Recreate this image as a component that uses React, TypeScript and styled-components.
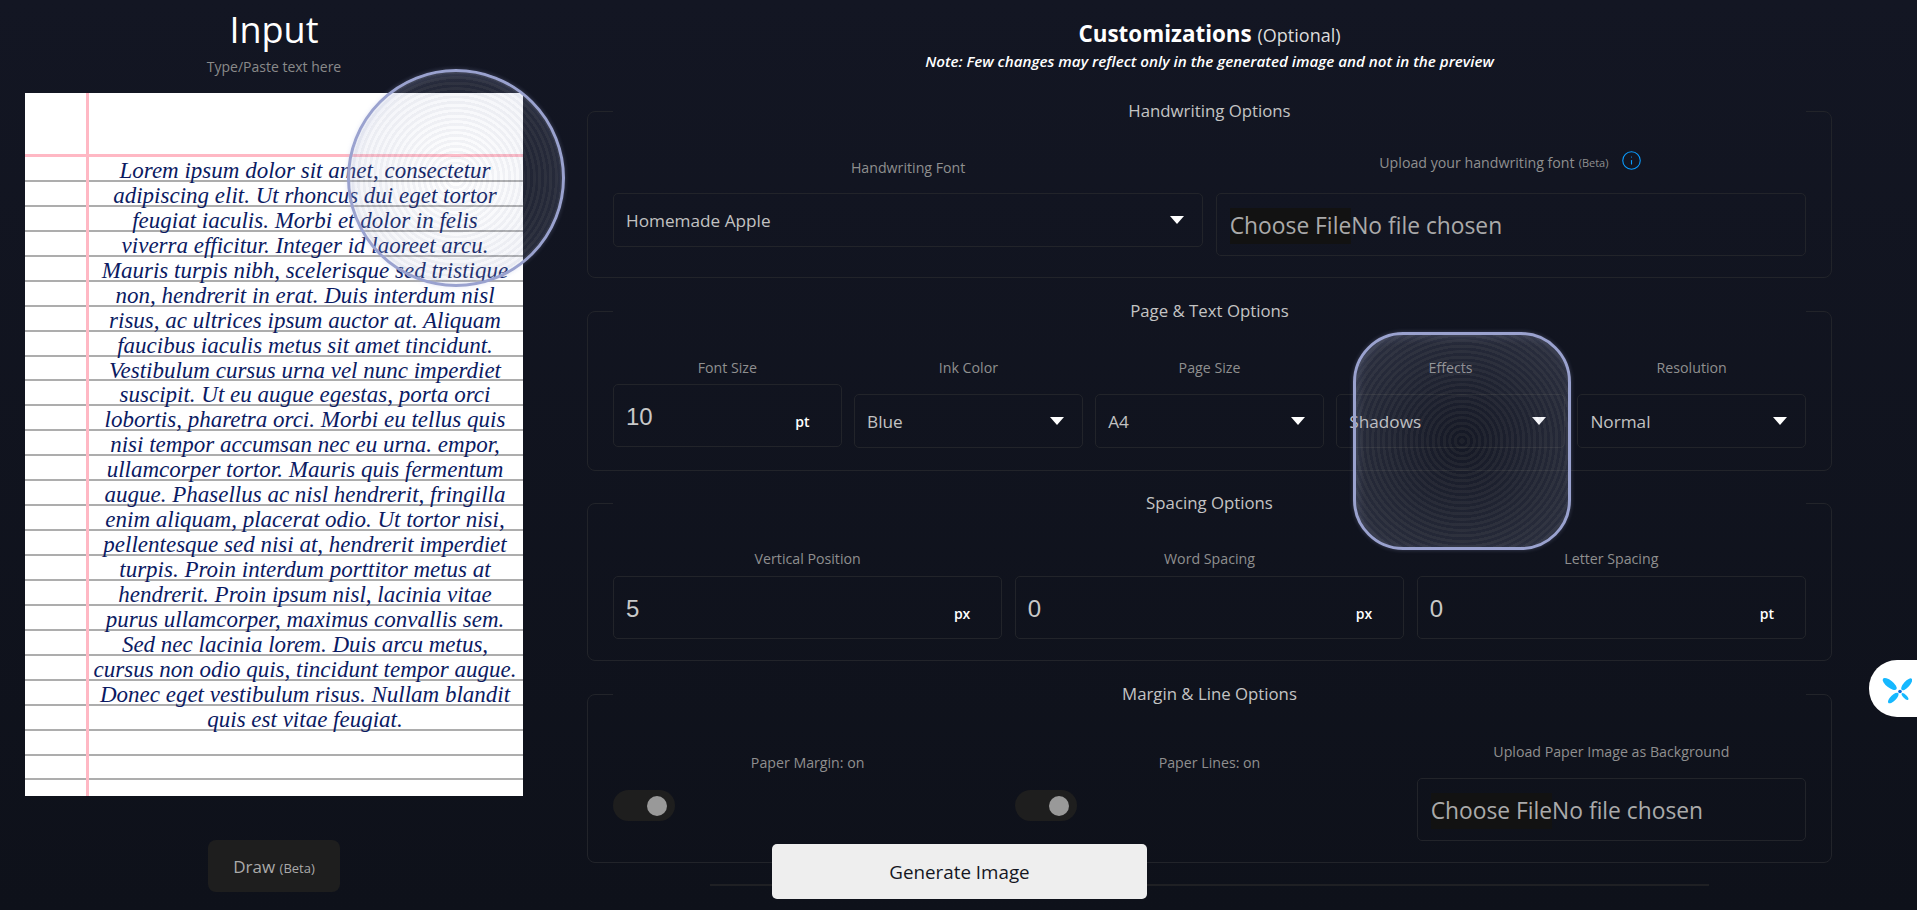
import React from 'react';
import styled, { createGlobalStyle } from 'styled-components';
import { Info } from 'lucide-react';

const UI_FONT = '"Open Sans", "Noto Sans", sans-serif';

const PAGE_LINES = [
  'Lorem ipsum dolor sit amet, consectetur',
  'adipiscing elit. Ut rhoncus dui eget tortor',
  'feugiat iaculis. Morbi et dolor in felis',
  'viverra efficitur. Integer id laoreet arcu.',
  'Mauris turpis nibh, scelerisque sed tristique',
  'non, hendrerit in erat. Duis interdum nisl',
  'risus, ac ultrices ipsum auctor at. Aliquam',
  'faucibus iaculis metus sit amet tincidunt.',
  'Vestibulum cursus urna vel nunc imperdiet',
  'suscipit. Ut eu augue egestas, porta orci',
  'lobortis, pharetra orci. Morbi eu tellus quis',
  'nisi tempor accumsan nec eu urna. empor,',
  'ullamcorper tortor. Mauris quis fermentum',
  'augue. Phasellus ac nisl hendrerit, fringilla',
  'enim aliquam, placerat odio. Ut tortor nisi,',
  'pellentesque sed nisi at, hendrerit imperdiet',
  'turpis. Proin interdum porttitor metus at',
  'hendrerit. Proin ipsum nisl, lacinia vitae',
  'purus ullamcorper, maximus convallis sem.',
  'Sed nec lacinia lorem. Duis arcu metus,',
  'cursus non odio quis, tincidunt tempor augue.',
  'Donec eget vestibulum risus. Nullam blandit',
  'quis est vitae feugiat.',
  '',
  '',
];

const GlobalStyle = createGlobalStyle`
  html, body {
    margin: 0;
    padding: 0;
    background: #10131d;
  }
  * {
    box-sizing: border-box;
  }
`;

const Page = styled.div`
  position: relative;
  display: flex;
  height: 910px;
  overflow: hidden;
  font-family: ${UI_FONT};
  background: linear-gradient(180deg, #131623 0%, #0e111a 100%);
`;

const LeftColumn = styled.section`
  width: 548px;
  flex: none;
  display: flex;
  flex-direction: column;
  align-items: center;
`;

const InputTitle = styled.h1`
  margin: 6px 0 0;
  height: 48px;
  font-size: 36px;
  line-height: 48px;
  font-weight: 400;
  color: #fff;
`;

const InputHint = styled.p`
  margin: 3px 0 17px;
  height: 19px;
  font-size: 14px;
  line-height: 19px;
  color: #8a8a8a;
`;

const Paper = styled.div`
  position: relative;
  width: 498px;
  height: 703px;
  background: #fff;
  flex: none;

  &::before {
    content: '';
    position: absolute;
    top: 0;
    bottom: 0;
    left: 61px;
    width: 3px;
    background: #ffb8c4;
  }
`;

const PaperHead = styled.div`
  height: 64px;
  border-bottom: 3px solid #ffb8c4;
`;

const WriteLine = styled.div`
  height: 24.95px;
  border-bottom: 2px solid #adadad;
  padding: 0 3px 0 65px;
  text-align: center;
  white-space: nowrap;
  font-family: 'Liberation Serif', serif;
  font-style: italic;
  font-size: 23px;
  line-height: 27px;
  color: #0b1a62;
`;

const DrawButton = styled.button`
  margin-top: 44px;
  width: 132px;
  height: 52px;
  border: none;
  border-radius: 8px;
  background: #1e1e1e;
  color: #aaa;
  font-family: ${UI_FONT};
  font-size: 17px;

  small {
    font-size: 13px;
  }
`;

const RightColumn = styled.main`
  flex: 1;
  padding: 0 85px 0 39px;
`;

const Header = styled.header`
  text-align: center;
  margin-bottom: 28px;
`;

const Heading = styled.h2`
  margin: 19px 0 0;
  height: 29px;
  font-size: 22.4px;
  line-height: 29px;
  font-weight: 700;
  color: #fff;

  small {
    font-size: 18px;
    font-weight: 400;
    color: #ddd;
  }
`;

const Note = styled.p`
  margin: 3px 0 0;
  height: 20px;
  font-size: 15.2px;
  line-height: 20px;
  font-style: italic;
  font-weight: 600;
  color: #fff;
`;

const Panel = styled.fieldset<{ $gap?: number }>`
  margin: ${(p) => p.$gap ?? 0}px 0 0;
  padding: 0 25px;
  border: 1px solid #22242a;
  border-radius: 8px;
  min-inline-size: 0;
`;

const Legend = styled.legend`
  width: 100%;
  padding: 0;
  height: 24px;
  text-align: center;
  font-size: 16.8px;
  line-height: 24px;
  color: #c4c4c4;
`;

const Row = styled.div<{ $cols: string; $top: number; $bottom: number }>`
  display: grid;
  grid-template-columns: ${(p) => p.$cols};
  column-gap: 12.5px;
  align-items: start;
  padding: ${(p) => p.$top}px 0 ${(p) => p.$bottom}px;
`;

const Field = styled.div<{ $gap: number; $top?: number }>`
  display: flex;
  flex-direction: column;
  gap: ${(p) => p.$gap}px;
  padding-top: ${(p) => p.$top ?? 0}px;
`;

const Label = styled.label`
  display: flex;
  align-items: center;
  justify-content: center;
  height: 20px;
  font-size: 14.2px;
  color: #8f8f8f;

  small {
    margin-left: 4px;
    font-size: 11px;
  }
`;

const InfoMark = styled(Info)`
  margin: -3px 0 0 13px;
  color: #0a9cff;
`;

const SelectBox = styled.div`
  height: 54px;
  display: flex;
  align-items: center;
  justify-content: space-between;
  padding: 0 18px 0 12px;
  border: 1px solid #22242a;
  border-radius: 5px;
  font-size: 17.2px;
  color: #c2c2c2;

  &::after {
    content: '';
    width: 0;
    height: 0;
    border-left: 7px solid transparent;
    border-right: 7px solid transparent;
    border-top: 8px solid #fff;
  }
`;

const NumberBox = styled.div`
  height: 63px;
  display: flex;
  align-items: center;
  justify-content: space-between;
  padding: 3px 31px 0 12px;
  border: 1px solid #22242a;
  border-radius: 5px;
`;

const NumberValue = styled.span`
  font-family: 'Liberation Sans', sans-serif;
  font-size: 24px;
  color: #c8c8c8;
`;

const Unit = styled.span`
  margin-top: 9px;
  font-size: 14px;
  font-weight: 600;
  color: #fff;
`;

const FileBox = styled.div`
  height: 63px;
  display: flex;
  align-items: center;
  padding: 0 13px;
  border: 1px solid #22242a;
  border-radius: 5px;
  font-size: 22.8px;
  color: #aaa;
`;

const FileButton = styled.span`
  height: 36px;
  margin-top: 2px;
  line-height: 36px;
  background: #121212;
`;

const FileStatus = styled.span`
  margin-top: 2px;
`;

const Toggle = styled.div`
  width: 62px;
  height: 31px;
  display: flex;
  align-items: center;
  justify-content: flex-end;
  padding-right: 8px;
  border-radius: 16px;
  background: #1e1e1e;

  &::after {
    content: '';
    width: 20px;
    height: 20px;
    border-radius: 50%;
    background: #999;
  }
`;

const Divider = styled.hr`
  margin: 21px 123px 0;
  border: none;
  height: 2px;
  background: #1f2024;
`;

const GenerateButton = styled.button`
  position: absolute;
  left: 772px;
  top: 844px;
  width: 375px;
  height: 55px;
  border: none;
  border-radius: 5px;
  background: #eee;
  color: #14161f;
  font-family: ${UI_FONT};
  font-size: 18.8px;
`;

const Glass = styled.div<{ $left: number; $top: number; $radius: string }>`
  position: absolute;
  left: ${(p) => p.$left}px;
  top: ${(p) => p.$top}px;
  width: 218px;
  height: 218px;
  border: 3px solid #9aa2cf;
  border-radius: ${(p) => p.$radius};
  pointer-events: none;
  background:
    repeating-radial-gradient(circle at center, rgba(255, 255, 255, 0.05) 0 2.5px, rgba(60, 70, 110, 0.05) 3px 5.5px),
    radial-gradient(circle at center, rgba(170, 178, 210, 0.01) 0%, rgba(170, 178, 210, 0.18) 100%);
  box-shadow:
    0 0 4px rgba(165, 175, 225, 0.3),
    inset 2px 2px 8px rgba(170, 180, 225, 0.2);
`;

const SideWidget = styled.div`
  position: absolute;
  right: 0;
  top: 660px;
  width: 48px;
  height: 57px;
  display: flex;
  align-items: center;
  padding-left: 11px;
  border-radius: 28px 0 0 28px;
  background: #fff;
`;

function WidgetIcon() {
  return (
    <svg width="32" height="32" viewBox="0 0 32 32">
      <ellipse cx="9.7" cy="11" rx="8.5" ry="3.5" fill="#16b8ff" transform="rotate(38 9.7 11)" />
      <ellipse cx="26.7" cy="11.3" rx="7.5" ry="3" fill="#16b8ff" transform="rotate(-48 26.7 11.3)" />
      <ellipse cx="13.3" cy="25" rx="7" ry="2.8" fill="#16b8ff" transform="rotate(-45 13.3 25)" />
      <ellipse cx="25" cy="23.5" rx="4.5" ry="1.7" fill="#16b8ff" transform="rotate(45 25 23.5)" />
      <circle cx="20" cy="18.5" r="1.8" fill="#0a6ae0" />
    </svg>
  );
}

function FilePicker() {
  return (
    <FileBox>
      <FileButton>Choose File</FileButton>
      <FileStatus>No file chosen</FileStatus>
    </FileBox>
  );
}

function SelectField(props: { label: string; value: string }) {
  return (
    <Field $gap={17}>
      <Label>{props.label}</Label>
      <SelectBox>{props.value}</SelectBox>
    </Field>
  );
}

function NumberField(props: { label: string; value: string; unit: string }) {
  return (
    <Field $gap={8}>
      <Label>{props.label}</Label>
      <NumberBox>
        <NumberValue>{props.value}</NumberValue>
        <Unit>{props.unit}</Unit>
      </NumberBox>
    </Field>
  );
}

export default function App() {
  return (
    <Page>
      <GlobalStyle />
      <LeftColumn>
        <InputTitle>Input</InputTitle>
        <InputHint>Type/Paste text here</InputHint>
        <Paper>
          <PaperHead />
          {PAGE_LINES.map((line, i) => (
            <WriteLine key={i}>{line}</WriteLine>
          ))}
        </Paper>
        <DrawButton>
          Draw <small>(Beta)</small>
        </DrawButton>
      </LeftColumn>

      <RightColumn>
        <Header>
          <Heading>
            Customizations <small>(Optional)</small>
          </Heading>
          <Note>Note: Few changes may reflect only in the generated image and not in the preview</Note>
        </Header>

        <Panel>
          <Legend>Handwriting Options</Legend>
          <Row $cols="1fr 1fr" $top={29} $bottom={21}>
            <Field $gap={16} $top={5}>
              <Label>Handwriting Font</Label>
              <SelectBox>Homemade Apple</SelectBox>
            </Field>
            <Field $gap={21}>
              <Label>
                Upload your handwriting font <small>(Beta)</small>
                <InfoMark size={21} strokeWidth={1.25} />
              </Label>
              <FilePicker />
            </Field>
          </Row>
        </Panel>

        <Panel $gap={21}>
          <Legend>Page &amp; Text Options</Legend>
          <Row $cols="repeat(5, 1fr)" $top={34} $bottom={22}>
            <Field $gap={7}>
              <Label>Font Size</Label>
              <NumberBox>
                <NumberValue>10</NumberValue>
                <Unit>pt</Unit>
              </NumberBox>
            </Field>
            <SelectField label="Ink Color" value="Blue" />
            <SelectField label="Page Size" value="A4" />
            <SelectField label="Effects" value="Shadows" />
            <SelectField label="Resolution" value="Normal" />
          </Row>
        </Panel>

        <Panel $gap={20}>
          <Legend>Spacing Options</Legend>
          <Row $cols="repeat(3, 1fr)" $top={33} $bottom={21}>
            <NumberField label="Vertical Position" value="5" unit="px" />
            <NumberField label="Word Spacing" value="0" unit="px" />
            <NumberField label="Letter Spacing" value="0" unit="pt" />
          </Row>
        </Panel>

        <Panel $gap={21}>
          <Legend>Margin &amp; Line Options</Legend>
          <Row $cols="repeat(3, 1fr)" $top={35} $bottom={21}>
            <Field $gap={18} $top={11}>
              <Label>Paper Margin: on</Label>
              <Toggle />
            </Field>
            <Field $gap={18} $top={11}>
              <Label>Paper Lines: on</Label>
              <Toggle />
            </Field>
            <Field $gap={17}>
              <Label>Upload Paper Image as Background</Label>
              <FilePicker />
            </Field>
          </Row>
        </Panel>

        <Divider />
      </RightColumn>

      <GenerateButton>Generate Image</GenerateButton>
      <Glass $left={347} $top={69} $radius="50%" />
      <Glass $left={1353} $top={332} $radius="50px" />
      <SideWidget>
        <WidgetIcon />
      </SideWidget>
    </Page>
  );
}
